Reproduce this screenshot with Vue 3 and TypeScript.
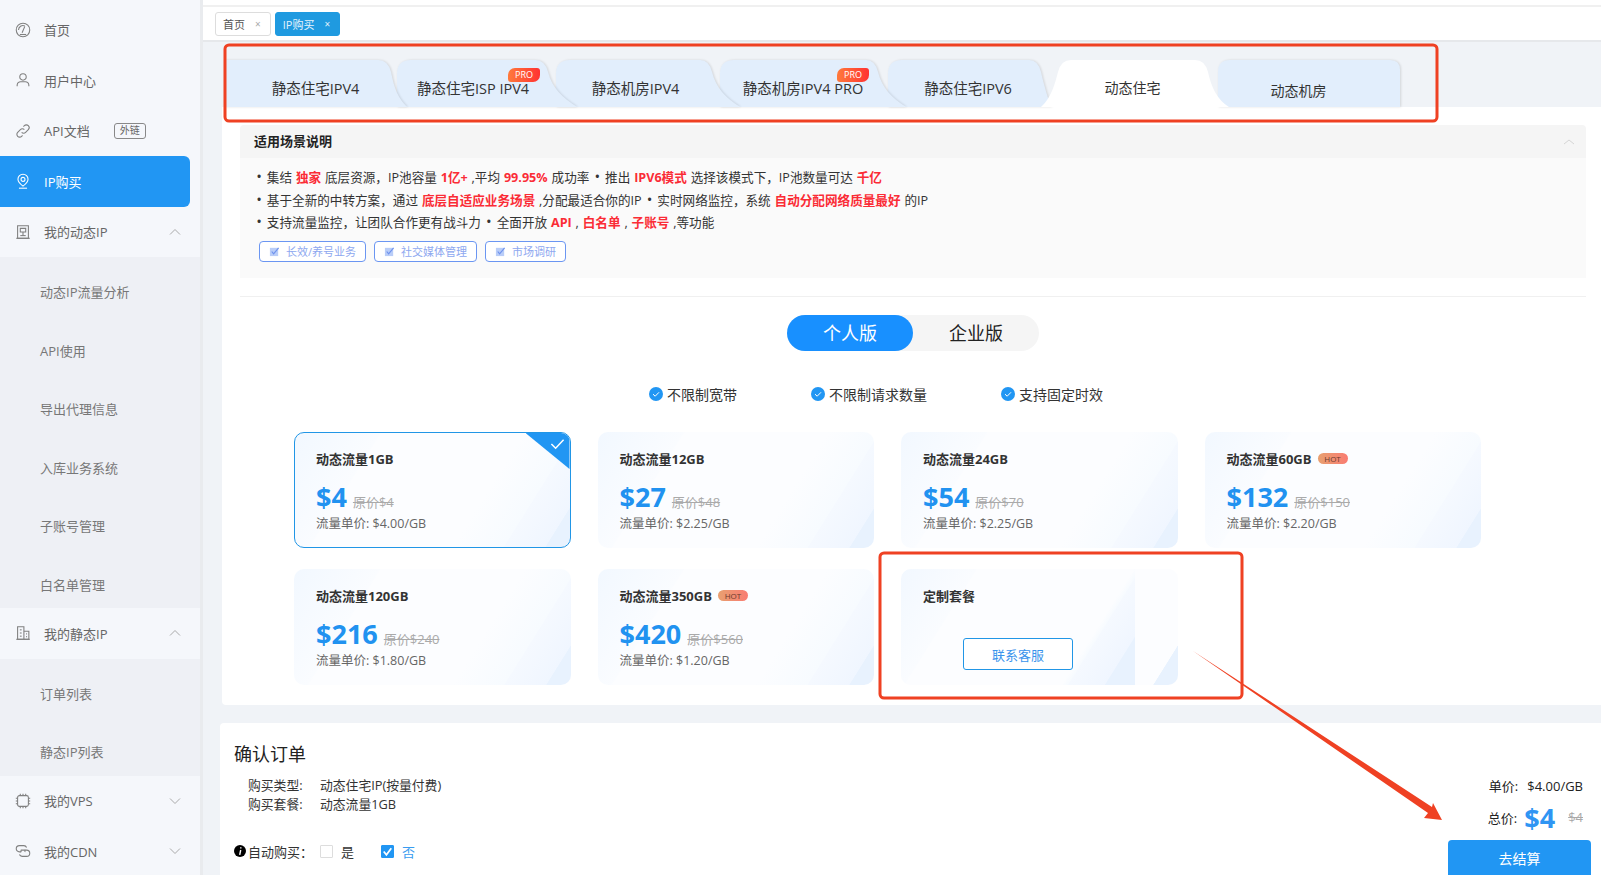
<script setup lang="ts">
import { ref } from 'vue'

interface MenuItem {
  label: string
  icon: string[]
  badge?: string
  active?: boolean
  arrow?: 'up' | 'down'
  children?: string[]
}

interface Tab {
  label: string
  width: number
  overlap: number
  shift: number
  path: string
  pro?: boolean
  active?: boolean
  low?: boolean
}

interface Plan {
  name: string
  price?: number
  original?: number
  unit?: string
  hot?: boolean
}

const menu: MenuItem[] = [
  {
    label: '首页',
    icon: ['M10 2.500a7.500 7.500 0 1 1 0 15a7.500 7.500 0 0 1 0-15z', 'M5 10a5 5 0 0 1 7-4.500', 'M9 13l3-7', 'M6.500 15h7']
  },
  {
    label: '用户中心',
    icon: ['M10 3a3.600 3.600 0 1 1 0 7.200a3.600 3.600 0 0 1 0-7.200z', 'M3.500 17v-1.500a4 4 0 0 1 4-3.500h5a4 4 0 0 1 4 3.500V17']
  },
  {
    label: 'API文档',
    badge: '外链',
    icon: ['M8.500 11.500a3 3 0 0 0 4.400 0l3-3a3.100 3.100 0 0 0-4.400-4.400l-1 1', 'M11.500 8.500a3 3 0 0 0-4.400 0l-3 3a3.100 3.100 0 0 0 4.400 4.400l1-1']
  },
  {
    label: 'IP购买',
    active: true,
    icon: ['M10 2.500a5.600 5.600 0 0 1 5.600 5.600c0 3.200-3.200 5.800-5.600 7.600c-2.400-1.800-5.600-4.400-5.600-7.600A5.600 5.600 0 0 1 10 2.500z', 'M10 6a2.200 2.200 0 1 1 0 4.400a2.200 2.200 0 0 1 0-4.400z', 'M5.500 18h9']
  },
  {
    label: '我的动态IP',
    arrow: 'up',
    icon: ['M4 3h12v14H4z', 'M2.500 17h15', 'M7 6h6v4H7z', 'M10 10v4', 'M7 14h6'],
    children: ['动态IP流量分析', 'API使用', '导出代理信息', '入库业务系统', '子账号管理', '白名单管理']
  },
  {
    label: '我的静态IP',
    arrow: 'up',
    icon: ['M4 3h7v14H4z', 'M11 8h5.500v9H11', 'M2.500 17h15', 'M6.500 6.500h2', 'M6.500 10h2', 'M6.500 13.500h2', 'M13.500 11h1', 'M13.500 14h1'],
    children: ['订单列表', '静态IP列表']
  },
  {
    label: '我的VPS',
    arrow: 'down',
    icon: ['M6 4h8a2 2 0 0 1 2 2v8a2 2 0 0 1-2 2H6a2 2 0 0 1-2-2V6a2 2 0 0 1 2-2z', 'M7 2v2M10 2v2M13 2v2M7 16v2M10 16v2M13 16v2M2 7h2M2 10h2M2 13h2M16 7h2M16 10h2M16 13h2']
  },
  {
    label: '我的CDN',
    arrow: 'down',
    icon: ['M8 11H6a3.500 3.500 0 0 1 0-7h5a3.500 3.500 0 0 1 3 2', 'M12 9h2a3.500 3.500 0 0 1 0 7H9a3.500 3.500 0 0 1-3-2', 'M8 11a2 2 0 0 1 0-2h4a2 2 0 0 1 0 2']
  }
]

const tabs: Tab[] = [
  { label: '静态住宅IPV4', width: 183, overlap: 10, shift: 0, path: 'M0 47V0H154Q164 0 167 12C170 28 174 38 183 47Z' },
  { label: '静态住宅ISP IPV4', width: 180, overlap: 21, shift: 28, pro: true, path: 'M0 47V14Q0 0 14 0H138Q148 0 151 12C155 28 166 38 180 47Z' },
  { label: '静态机房IPV4', width: 184, overlap: 20, shift: 25, path: 'M0 47V14Q0 0 14 0H144Q153 0 156 12C160 28 170 38 184 47Z' },
  { label: '静态机房IPV4 PRO', width: 186, overlap: 18, shift: 20, pro: true, path: 'M0 47V14Q0 0 14 0H146Q155 0 158 12C162 28 172 38 186 47Z' },
  { label: '静态住宅IPV6', width: 163, overlap: 10, shift: 3, path: 'M0 47V14Q0 0 14 0H141Q150 0 153 12C156 26 160 38 163 47Z' },
  { label: '动态住宅', width: 188, overlap: 11, shift: 5, active: true, path: 'M0 49C10 40 14 26 17 14Q20 2 30 2H154Q164 2 167 14C170 28 176 42 188 49Z' },
  { label: '动态机房', width: 182, overlap: 0, shift: 21, low: true, path: 'M0 47V12Q0 0 12 0H172Q182 0 182 10V47Z' }
]

const tags = ['长效/养号业务', '社交媒体管理', '市场调研']

const features = ['不限制宽带', '不限制请求数量', '支持固定时效']

const plans: Plan[] = [
  { name: '动态流量1GB', price: 4, original: 4, unit: '4.00' },
  { name: '动态流量12GB', price: 27, original: 48, unit: '2.25' },
  { name: '动态流量24GB', price: 54, original: 70, unit: '2.25' },
  { name: '动态流量60GB', price: 132, original: 150, unit: '2.20', hot: true },
  { name: '动态流量120GB', price: 216, original: 240, unit: '1.80' },
  { name: '动态流量350GB', price: 420, original: 560, unit: '1.20', hot: true },
  { name: '定制套餐' }
]

const edition = ref('personal')
const selected = ref(0)
</script>

<template>
  <div class="page">
    <aside class="side">
      <template v-for="item in menu" :key="item.label">
        <div class="side-row" :class="{ active: item.active }">
          <svg class="side-icon" viewBox="0 0 20 20" fill="none" stroke="currentColor" stroke-width="1.2">
            <path v-for="d in item.icon" :key="d" :d="d" />
          </svg>
          <span>{{ item.label }}</span>
          <em v-if="item.badge" class="side-badge">{{ item.badge }}</em>
          <svg v-if="item.arrow" class="side-arrow" viewBox="0 0 12 8" fill="none" stroke="currentColor" stroke-width="1">
            <path :d="item.arrow === 'up' ? 'M1 6.500L6 1.500L11 6.500' : 'M1 1.500L6 6.500L11 1.500'" />
          </svg>
        </div>
        <div v-if="item.children" class="side-sub">
          <div v-for="child in item.children" :key="child" class="side-subrow">{{ child }}</div>
        </div>
      </template>
    </aside>

    <div class="main">
      <header class="top">
        <div class="top-tabs">
          <span class="top-tab">首页<i>×</i></span>
          <span class="top-tab on">IP购买<i>×</i></span>
        </div>
      </header>

      <div class="content">
        <div class="tab-strip">
          <div
            v-for="(tab, i) in tabs"
            :key="tab.label"
            class="tab"
            :class="{ active: tab.active, low: tab.low }"
            :style="{ width: tab.width + 'px', marginRight: -tab.overlap + 'px', zIndex: tab.active ? 20 : 10 - i, paddingRight: tab.shift + 'px' }"
          >
            <svg class="tab-bg" :viewBox="`0 0 ${tab.width} 49`" :width="tab.width" height="49">
              <path :d="tab.path" />
            </svg>
            <span class="tab-text">{{ tab.label }}</span>
            <b v-if="tab.pro" class="pro">PRO</b>
          </div>
        </div>

        <section class="panel">
          <div class="desc-head">
            适用场景说明
            <svg class="desc-arrow" viewBox="0 0 12 8" fill="none" stroke="currentColor" stroke-width="1">
              <path d="M1 6L6 2L11 6" />
            </svg>
          </div>
          <div class="desc-body">
            <p><i class="dot">•</i> 集结 <b>独家</b> 底层资源，IP池容量 <b>1亿+</b> ,平均 <b>99.95%</b> 成功率 <i class="dot">•</i> 推出 <b>IPV6模式</b> 选择该模式下，IP池数量可达 <b>千亿</b></p>
            <p><i class="dot">•</i> 基于全新的中转方案，通过 <b>底层自适应业务场景</b> ,分配最适合你的IP <i class="dot">•</i> 实时网络监控，系统 <b>自动分配网络质量最好</b> 的IP</p>
            <p><i class="dot">•</i> 支持流量监控，让团队合作更有战斗力 <i class="dot">•</i> 全面开放 <b>API</b> , <b>白名单</b> , <b>子账号</b> ,等功能</p>
            <div class="tags">
              <span v-for="tag in tags" :key="tag" class="tag">
                <svg viewBox="0 0 12 12" width="11" height="11">
                  <rect x="1" y="2" width="9" height="9" fill="#b9cdf8" />
                  <path d="M3 6l2 2.500L10.500 2" fill="none" stroke="#6f93ee" stroke-width="1.300" />
                </svg>
                {{ tag }}
              </span>
            </div>
          </div>

          <div class="divider"></div>

          <div class="edition">
            <button class="edition-btn" :class="{ on: edition === 'personal' }" @click="edition = 'personal'">个人版</button>
            <button class="edition-btn" :class="{ on: edition === 'company' }" @click="edition = 'company'">企业版</button>
          </div>

          <div class="features">
            <span v-for="f in features" :key="f" class="feature">
              <svg viewBox="0 0 14 14" width="14" height="14">
                <circle cx="7" cy="7" r="7" fill="#2196f3" />
                <path d="M4 7.200l2.200 2L10 5.300" fill="none" stroke="#fff" stroke-width="1" />
              </svg>
              {{ f }}
            </span>
          </div>

          <div class="plans">
            <div
              v-for="(plan, i) in plans"
              :key="plan.name"
              class="plan"
              :class="{ selected: selected === i, custom: !plan.price }"
              @click="selected = i"
            >
              <div class="plan-name">
                {{ plan.name }}
                <span v-if="plan.hot" class="hot">HOT</span>
              </div>
              <template v-if="plan.price">
                <div class="plan-price">
                  <strong>${{ plan.price }}</strong>
                  <s>原价${{ plan.original }}</s>
                </div>
                <div class="plan-unit">流量单价: ${{ plan.unit }}/GB</div>
              </template>
              <button v-else class="contact">联系客服</button>
              <div v-if="selected === i" class="corner">
                <svg viewBox="0 0 16 12" width="15" height="12" fill="none" stroke="#fff" stroke-width="1.600">
                  <path d="M1.500 6l4.500 4.500L14.500 1.500" />
                </svg>
              </div>
            </div>
          </div>
        </section>

        <section class="order">
          <div class="order-left">
            <h2>确认订单</h2>
            <div class="order-line"><span>购买类型:</span><span>动态住宅IP(按量付费)</span></div>
            <div class="order-line"><span>购买套餐:</span><span>动态流量1GB</span></div>
            <div class="auto">
              <svg viewBox="0 0 12 12" width="12" height="12">
                <circle cx="6" cy="6" r="6" fill="#000" />
                <path d="M6.800 2.200v1.400M6.700 5L5.700 9.800" stroke="#fff" stroke-width="1.400" />
              </svg>
              <span class="auto-label">自动购买：</span>
              <span class="check"></span><span class="auto-opt">是</span>
              <span class="check on">
                <svg viewBox="0 0 12 12" width="13" height="13" fill="none" stroke="#fff" stroke-width="1.600">
                  <path d="M2.500 6l2.500 3L9.500 3" />
                </svg>
              </span><span class="auto-opt blue">否</span>
            </div>
          </div>
          <div class="order-right">
            <div class="sum-line"><span>单价:</span><span class="sum-unit">$4.00/GB</span></div>
            <div class="sum-line total"><span>总价:</span><strong>$4</strong><s>$4</s></div>
            <button class="pay">去结算</button>
          </div>
        </section>
      </div>
    </div>

    <!-- red marks drawn over the screenshot -->
    <svg class="marks" viewBox="0 0 1601 875" width="1601" height="875" fill="none">
      <rect x="225" y="45" width="1212" height="76" rx="4" stroke="#ef4123" stroke-width="3" />
      <rect x="880" y="553" width="362" height="145" rx="4" stroke="#ef4123" stroke-width="3" />
      <polygon points="1193,651 1432,807 1433,803 1442,820 1424,818 1428,813" fill="#ef4123" />
    </svg>
  </div>
</template>

<style scoped>
.page {
  display: flex;
  width: 1601px;
  height: 875px;
  overflow: hidden;
  position: relative;
  font-family: "Open Sans", "Noto Sans CJK SC", sans-serif;
  font-size: 13px;
  color: #333;
  background: #f0f3f7;
}

/* sidebar */
.side {
  width: 200px;
  flex: none;
  padding-top: 4.500px;
  background: #f5f7fb;
  box-sizing: border-box;
  box-shadow: 3px 0 0 #e9ebee;
  color: #666;
  font-size: 13px;
}

.side-row {
  position: relative;
  display: flex;
  align-items: center;
  height: 50.500px;
  padding-left: 14px;
  box-sizing: border-box;
}

.side-row.active {
  width: 190px;
  color: #fff;
  background: #2196f3;
  border-radius: 0 6px 6px 0;
}

.side-icon {
  width: 18px;
  height: 18px;
  margin-right: 12px;
  flex: none;
  color: #808080;
}

.side-row.active .side-icon {
  color: #fff;
}

.side-badge {
  margin-left: 24px;
  padding: 0 5px;
  height: 14px;
  line-height: 13px;
  font-size: 10px;
  font-style: normal;
  border: 1px solid #888;
  border-radius: 3px;
}

.side-arrow {
  position: absolute;
  left: 169px;
  top: 21px;
  width: 12px;
  height: 8px;
  color: #aaa;
}

.side-sub {
  background: #eef0f5;
  font-size: 13px;
  color: #777;
}

.side-subrow {
  height: 58.500px;
  box-sizing: border-box;
  padding: 12px 0 0 40px;
  line-height: 46.500px;
}

/* header */
.main {
  flex: 1;
  min-width: 0;
  margin-left: 3px;
}

.top {
  height: 40px;
  padding-top: 5px;
  box-sizing: border-box;
  background: #fff;
  box-shadow: 0 2px 0 #e6e8eb;
}

.top-tabs {
  display: flex;
  gap: 4px;
  padding: 5px 0 0 12px;
  background: #fff;
  border-top: 2px solid #f0f0f0;
  height: 33px;
  box-sizing: border-box;
}

.top-tab {
  display: flex;
  align-items: center;
  height: 24px;
  padding: 0 9px 0 7px;
  box-sizing: border-box;
  border: 1px solid #ddd;
  border-radius: 3px;
  font-size: 11px;
  color: #555;
}

.top-tab i {
  margin-left: 10px;
  font-size: 10px;
  font-style: normal;
  color: #aaa;
}

.top-tab.on {
  color: #e5f3fc;
  background: #1f9ae0;
  border-color: #1f9ae0;
}

.top-tab.on i {
  color: #e5f3fc;
}

/* product tabs */
.content {
  padding-left: 19px;
}

.tab-strip {
  display: flex;
  height: 47px;
  margin-top: 20px;
  padding-left: 2px;
}

.tab {
  position: relative;
  flex: none;
  height: 47px;
  box-sizing: border-box;
  display: flex;
  align-items: center;
  justify-content: center;
  color: #333;
  font-size: 14.500px;
  padding-top: 8px;
}

.tab.active {
  margin-top: -2px;
  height: 49px;
  font-size: 14px;
  padding-top: 8px;
}

.tab.low {
  font-size: 14px;
  padding-top: 13px;
}

.tab-bg {
  position: absolute;
  left: 0;
  top: 0;
  overflow: visible;
  filter: drop-shadow(1px 0 1px rgba(0, 0, 0, 0.12));
}

.tab-bg path {
  fill: #e2eefc;
}

.tab.active .tab-bg {
  filter: none;
}

.tab.active .tab-bg path {
  fill: #fff;
}

.tab-text {
  position: relative;
}

.pro {
  position: absolute;
  top: 8px;
  right: 37px;
  width: 32px;
  height: 14px;
  line-height: 14px;
  text-align: center;
  font-size: 9px;
  font-weight: 400;
  color: #fff;
  background: linear-gradient(90deg, #ff7a3c, #ff3232);
  border-radius: 7px 3px 7px 3px;
}

/* main card */
.panel {
  position: relative;
  height: 598px;
  box-sizing: border-box;
  padding: 18px 15px 0 18px;
  background: #fff;
  border-radius: 0 0 0 4px;
}

.desc-head {
  position: relative;
  height: 33px;
  line-height: 32px;
  padding-left: 14px;
  font-weight: 700;
  color: #222;
  background: #f5f5f5;
  border-radius: 4px 4px 0 0;
}

.desc-arrow {
  position: absolute;
  right: 11px;
  top: 13px;
  width: 12px;
  height: 8px;
  color: #d5d5d5;
}

.desc-body {
  height: 120px;
  box-sizing: border-box;
  padding: 9px 0 0 15px;
  background: #fafafa;
}

.desc-body p {
  margin: 0;
  line-height: 22.500px;
  font-size: 12.600px;
  word-spacing: 0.600px;
  color: #333;
}

.desc-body b {
  color: #fa2c36;
}

.dot {
  display: inline-block;
  width: 8px;
  font-size: 15px;
  line-height: 1;
  font-style: normal;
  text-align: center;
}

.tags {
  display: flex;
  gap: 8px;
  margin: 6px 0 0 4px;
}

.tag {
  display: flex;
  align-items: center;
  gap: 6px;
  height: 21px;
  padding: 0 9px;
  box-sizing: border-box;
  font-size: 11px;
  color: #8ea8f0;
  background: #fff;
  border: 1px solid #6b96f2;
  border-radius: 4px;
}

.divider {
  margin-top: 18px;
  height: 1px;
  background: #f0f0f0;
}

.edition {
  display: flex;
  width: 252px;
  height: 36px;
  margin: 18px auto 0;
  background: #f5f5f5;
  border-radius: 18px;
}

.edition-btn {
  width: 126px;
  padding: 0 0 3px;
  border: 0;
  border-radius: 18px;
  background: transparent;
  font: inherit;
  font-size: 18px;
  color: #222;
}

.edition-btn.on {
  color: #fff;
  background: #1890ff;
}

.features {
  display: flex;
  gap: 74px;
  height: 20px;
  margin-top: 33px;
  padding-left: 409px;
  font-size: 14px;
}

.feature {
  display: flex;
  align-items: center;
  gap: 4px;
  color: #333;
}

/* plan cards */
.plans {
  display: grid;
  grid-template-columns: repeat(4, 276.500px);
  column-gap: 27px;
  row-gap: 21px;
  margin: 28px 0 0 54px;
}

.plan {
  position: relative;
  height: 116px;
  box-sizing: border-box;
  padding: 17px 22px 0;
  overflow: hidden;
  border-radius: 10px;
  background: linear-gradient(122deg, #f2f8ff 0%, #fafcff 24.500%, #fcfdff 25%, #fcfdff 66%, #f7fbff 80.800%, #f5f9ff 81%, #f0f6ff 92.800%, #e8f2fe 93%, #e8f2fe 100%);
}

.plan.selected {
  padding: 16px 21px 0;
  border: 1px solid #2196e6;
}

.plan.custom {
  background:
    linear-gradient(122deg, #f2f8ff 0%, #fafcff 24.500%, #fcfdff 25%, #fcfdff 76%, #f7fbff 78%, #f5f9ff 78.300%, #f0f6ff 90%, #e8f2fe 90.300%, #e8f2fe 100%) 0 0 / 234px 100% no-repeat,
    linear-gradient(122deg, #fcfdff 0%, #fcfdff 92.800%, #e8f2fe 93%, #e8f2fe 100%);
}

.plan-name {
  display: flex;
  align-items: center;
  gap: 6px;
  height: 18px;
  font-weight: 700;
  color: #333;
}

.hot {
  width: 30px;
  height: 11px;
  line-height: 11px;
  text-align: center;
  font-size: 8px;
  font-weight: 400;
  color: #6b3a2e;
  background: linear-gradient(90deg, #e8a070, #f97c72);
  border-radius: 6px;
}

.plan-price {
  display: flex;
  align-items: baseline;
  gap: 6px;
  height: 36px;
  line-height: 36px;
  margin-top: 12px;
}

.plan-price strong {
  font-size: 27px;
  font-weight: 700;
  color: #2192f0;
}

.plan-price s {
  color: #aaa;
  font-size: 13px;
}

.plan-unit {
  line-height: 18px;
  font-size: 12.500px;
  color: #666;
}

.contact {
  display: block;
  width: 110px;
  height: 32px;
  margin: 34px 0 0 40px;
  border: 1px solid #2196e6;
  border-radius: 3px;
  background: #fff;
  font: inherit;
  color: #3a94ec;
}

.corner {
  position: absolute;
  top: 0;
  right: 0;
  width: 44px;
  height: 36px;
  background: #2196f3;
  clip-path: polygon(0 0, 100% 0, 100% 100%);
}

.corner svg {
  position: absolute;
  right: 5px;
  top: 5px;
}

/* order footer */
.order {
  display: flex;
  justify-content: space-between;
  height: 152px;
  margin: 18px 0 0 -2px;
  box-sizing: border-box;
  padding: 18px 10px 0 14px;
  background: #fff;
  border-radius: 4px 0 0 0;
}

.order h2 {
  margin: 0 0 9px;
  font-size: 18px;
  line-height: 26px;
  font-weight: 400;
  color: #222;
}

.order-line {
  display: flex;
  line-height: 19px;
  padding-left: 14px;
  font-size: 12.800px;
  color: #333;
}

.order-line span:first-child {
  width: 72px;
}

.auto {
  display: flex;
  align-items: center;
  height: 18px;
  margin-top: 28px;
  color: #333;
}

.auto-label {
  width: 72px;
  margin-left: 2px;
}

.check {
  width: 13px;
  height: 13px;
  box-sizing: border-box;
  border: 1px solid #ddd;
  background: #fff;
  border-radius: 1px;
}

.check.on {
  display: flex;
  background: #2196f3;
  border-color: #2196f3;
}

.check.on svg {
  margin: -1px;
}

.auto-opt {
  width: 48px;
  padding-left: 8px;
  box-sizing: border-box;
}

.auto-opt.blue {
  color: #3a9cf0;
}

.order-right {
  display: flex;
  flex-direction: column;
  align-items: flex-end;
  width: 143px;
}

.sum-line {
  display: flex;
  align-items: center;
  height: 20px;
  margin: 35px 8px 0 0;
  color: #222;
}

.sum-unit {
  margin-left: 9px;
}

.sum-line.total {
  height: 36px;
  margin-top: 4px;
}

.sum-line strong {
  margin: 0 13px 0 7px;
  font-size: 27px;
  font-weight: 700;
  color: #2f95f3;
}

.sum-line s {
  color: #aaa;
}

.pay {
  width: 143px;
  height: 40px;
  margin-top: 5px;
  padding: 0 0 5px;
  flex: none;
  border: 0;
  border-radius: 4px 4px 0 0;
  background: #2196f3;
  font: inherit;
  font-size: 14px;
  color: #fff;
}

.marks {
  position: absolute;
  left: 0;
  top: 0;
  pointer-events: none;
  z-index: 30;
}
</style>

<style>
html,
body {
  margin: 0;
  overflow: hidden;
}
</style>
